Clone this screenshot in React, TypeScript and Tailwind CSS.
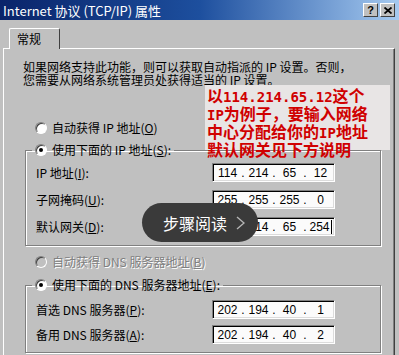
import React from "react";

const ipRows = [
  { label: "IP 地址", key: "I", parts: ["114", "214", "65", "12"] },
  { label: "子网掩码", key: "U", parts: ["255", "255", "255", "0"] },
  { label: "默认网关", key: "D", parts: ["114", "214", "65", "254"], caret: true },
];

const dnsRows = [
  { label: "首选 DNS 服务器", key: "P", parts: ["202", "194", "40", "1"] },
  { label: "备用 DNS 服务器", key: "A", parts: ["202", "194", "40", "2"] },
];

function Radio({ checked, disabled }: { checked?: boolean; disabled?: boolean }) {
  return (
    <span
      className={`flex h-[12px] w-[12px] shrink-0 items-center justify-center rounded-full border border-t-[#808080] border-l-[#808080] border-r-white border-b-white shadow-[inset_1px_1px_0_#404040] ${
        disabled ? "bg-[#c0c0c0]" : "bg-white"
      }`}
    >
      {checked && <span className="h-[4px] w-[4px] rounded-full bg-black" />}
    </span>
  );
}

function IpBox({ parts, caret }: { parts: string[]; caret?: boolean }) {
  return (
    <div className="flex h-[19px] w-[123px] items-center border border-t-[#808080] border-l-[#808080] border-r-white border-b-white bg-[#fbfbfb] pl-[2px] font-['Liberation_Sans',sans-serif] text-[12px] leading-none text-black shadow-[inset_1px_1px_0_#000,inset_-1px_-1px_0_#dcdcdc]">
      {parts.map((p, i) => (
        <React.Fragment key={i}>
          {i > 0 && <span className="w-[6px] text-center">.</span>}
          <span className="flex w-[25px] items-center justify-center">
            {p}
            {caret && i === 3 && <span className="ml-px inline-block h-[14px] w-px bg-black" />}
          </span>
        </React.Fragment>
      ))}
    </div>
  );
}

function Row({ label, k, children }: { label: string; k: string; children: React.ReactNode }) {
  return (
    <div className="grid h-[19px] grid-cols-[176px_123px] items-center">
      <span>
        {label}(<u>{k}</u>):
      </span>
      {children}
    </div>
  );
}

// latin bits of the red note, set in a monospace face like the original
function Mono({ children }: { children: React.ReactNode }) {
  return <span className="font-['DejaVu_Sans_Mono',monospace] text-[14px]">{children}</span>;
}

export default function App() {
  return (
    <div className="relative flex h-[355px] w-[399px] flex-col overflow-hidden bg-[#c0c0c0] font-['Noto_Sans_CJK_SC','Liberation_Sans',sans-serif] text-[12px] leading-[16px] text-black">
      {/* title bar */}
      <div className="flex h-[20px] shrink-0 items-center justify-between bg-gradient-to-r from-[#0a246a] via-[#1d4f9e] to-[#a6caf0] pl-[3px] pr-[4px]">
        <span className="text-[13px] leading-none text-white">Internet 协议 (TCP/IP) 属性</span>
        <div className="flex gap-[2px]">
          <div className="flex h-[14px] w-[15px] items-center justify-center border border-t-white border-l-white border-r-[#404040] border-b-[#404040] bg-[#c0c0c0] font-['Liberation_Sans',sans-serif] text-[11px] font-bold leading-none">
            ?
          </div>
          <div className="flex h-[14px] w-[15px] items-center justify-center border border-t-white border-l-white border-r-[#404040] border-b-[#404040] bg-[#c0c0c0]">
            <svg width="8" height="7" viewBox="0 0 8 7">
              <path d="M0.5 0.5 L7.5 6.5 M7.5 0.5 L0.5 6.5" stroke="#000" strokeWidth="1.8" />
            </svg>
          </div>
        </div>
      </div>

      {/* tab */}
      <div className="h-[28px] shrink-0">
        <div className="relative z-10 ml-[9px] mt-[8px] flex h-[21px] w-[51px] items-center rounded-t-[2px] border-t border-l border-r border-t-white border-l-white border-r-[#404040] bg-[#c0c0c0] pl-[7px] text-[12px]">
          常规
        </div>
      </div>

      {/* panel */}
      <div className="ml-[3px] mr-[4px] flex-1 border-t border-l border-r border-t-white border-l-white border-r-[#404040] shadow-[inset_-1px_0_0_#808080]">
        <p className="pl-[19px] pt-[11px] leading-[13px]">
          如果网络支持此功能，则可以获取自动指派的 IP 设置。否则，
          <br />
          您需要从网络系统管理员处获得适当的 IP 设置。
        </p>

        <div className="mt-[34px] flex h-[16px] items-center gap-[5px] pl-[31px]">
          <Radio />
          <span>
            自动获得 IP 地址(<u>O</u>)
          </span>
        </div>

        <fieldset className="ml-[21px] mt-[6px] w-[356px] border border-[#808080] p-0 shadow-[inset_1px_1px_0_#fff,1px_1px_0_#fff]">
          <legend className="ml-[6px] flex h-[16px] items-center gap-[5px] px-[3px]">
            <Radio checked />
            <span>
              使用下面的 IP 地址(<u>S</u>):
            </span>
          </legend>
          <div className="flex flex-col gap-[8px] pb-[9px] pl-[10px] pt-[5px]">
            {ipRows.map((r) => (
              <Row key={r.key} label={r.label} k={r.key}>
                <IpBox parts={r.parts} caret={r.caret} />
              </Row>
            ))}
          </div>
        </fieldset>

        <div className="mt-[8px] flex h-[16px] items-center gap-[5px] pl-[31px] text-[#808080] [text-shadow:1px_1px_0_#fff]">
          <Radio disabled />
          <span>
            自动获得 DNS 服务器地址(<u>B</u>)
          </span>
        </div>

        <fieldset className="ml-[21px] mt-[7px] w-[356px] border border-[#808080] p-0 shadow-[inset_1px_1px_0_#fff,1px_1px_0_#fff]">
          <legend className="ml-[6px] flex h-[16px] items-center gap-[5px] px-[3px]">
            <Radio checked />
            <span>
              使用下面的 DNS 服务器地址(<u>E</u>):
            </span>
          </legend>
          <div className="flex flex-col gap-[6px] pb-[8px] pl-[10px] pt-[7px]">
            {dnsRows.map((r) => (
              <Row key={r.key} label={r.label} k={r.key}>
                <IpBox parts={r.parts} />
              </Row>
            ))}
          </div>
        </fieldset>
      </div>

      {/* red note pasted over the dialog */}
      <div className="absolute left-[205px] top-[85px] h-[65px] w-[185px] bg-[#e8e5e5] pl-[2px] pt-[2px] text-[16px] font-bold leading-[16px] text-[#d00000]">
        以<Mono>114.214.65.12</Mono>这个
        <br />
        <Mono>IP</Mono>为例子，要输入网络
        <br />
        中心分配给你的<Mono>IP</Mono>地址
        <br />
        默认网关见下方说明
      </div>

      {/* step reading pill */}
      <div className="absolute left-[142px] top-[203px] flex h-[39px] w-[116px] items-center gap-[9px] rounded-full bg-[#3a3a3a] pl-[21px] text-[16px] leading-none text-white">
        <span>步骤阅读</span>
        <svg width="9" height="14" viewBox="0 0 9 14">
          <path d="M1 1 L8 7 L1 13" fill="none" stroke="#b5b5b5" strokeWidth="1.4" />
        </svg>
      </div>
    </div>
  );
}
